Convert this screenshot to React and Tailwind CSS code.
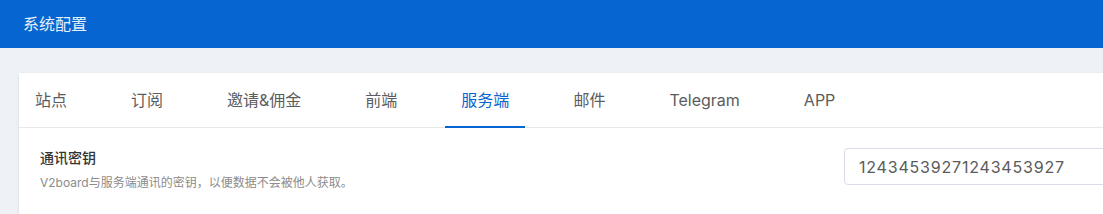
const tabs = ["站点", "订阅", "邀请&佣金", "前端", "服务端", "邮件", "Telegram", "APP"];

export default function App() {
  const active = "服务端";
  return (<div className="h-[214px] w-[1103px] overflow-hidden bg-[#eef1f6]" style={{ fontFamily: 'Inter, "Noto Sans CJK SC", sans-serif' }}>
      <header className="flex h-[48px] items-center bg-[#0665d0] px-[23px]">
        <h1 className="text-[16px] text-white/90">系统配置</h1>
      </header>
      <div className="ml-[19px] mt-[25px] w-[1300px] bg-white shadow-sm">
        <nav className="flex border-b border-[#e8e8e8]">
          {tabs.map((t) => (<div key={t} className={`relative mr-[32px] px-[16px] py-[15px] text-[16px] leading-[24px] ${t === active ? "text-[#0665d0]" : "text-[#5c5c5c]"}`}>
              {t}
              {t === active && <span className="absolute bottom-[-1px] left-0 right-0 h-[2px] bg-[#0665d0]"/>}
            </div>))}
        </nav>
        <div className="flex px-[21px] pt-[20px] pb-[60px]">
          <div className="w-[804px] shrink-0">
            <div className="text-[14px] font-medium leading-[20px] text-[#333]">通讯密钥</div>
            <div className="mt-[5px] text-[12px] leading-[20px] text-[#8c8c8c]">V2board与服务端通讯的密钥，以便数据不会被他人获取。</div>
          </div>
          <input defaultValue="12434539271243453927" className="h-[37px] w-[420px] rounded-[4px] border border-[#d8dde6] px-[14px] text-[16px] tracking-[0.05em] text-[#5a5a5a] outline-none"/>
        </div>
      </div>
    </div>);
}
